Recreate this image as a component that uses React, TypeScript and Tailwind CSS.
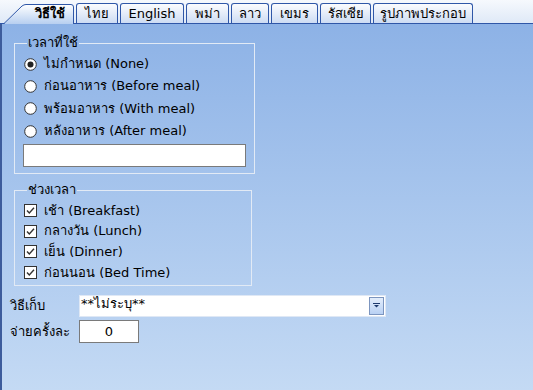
import React from "react";

const font = { fontFamily: '"DejaVu Sans", Tahoma, "Noto Sans", sans-serif' };

function Radio({ checked }: { checked?: boolean }) {
  return (
    <svg width="13" height="13" viewBox="0 0 13 13" className="shrink-0">
      <circle cx="6.5" cy="6.5" r="5.8" fill="#fff" stroke="#333" strokeWidth="1" />
      {checked && <circle cx="6.5" cy="6.5" r="3" fill="#222" />}
    </svg>
  );
}

function Check() {
  return (
    <svg width="13" height="13" viewBox="0 0 13 13" className="shrink-0">
      <rect x="0.5" y="0.5" width="12" height="12" fill="#fff" stroke="#333" />
      <path d="M3 6.5 L5.3 9 L10 3.8" fill="none" stroke="#333" strokeWidth="1.4" />
    </svg>
  );
}

const tabs = [
  { label: "ไทย", w: 42 },
  { label: "English", w: 64 },
  { label: "พม่า", w: 43 },
  { label: "ลาว", w: 38 },
  { label: "เขมร", w: 47 },
  { label: "รัสเซีย", w: 51 },
  { label: "รูปภาพประกอบ", w: 100 },
];

export default function App() {
  return (
    <div className="w-[533px] h-[390px] overflow-hidden flex flex-col text-[13px] text-black" style={font}>
      {/* tab strip */}
      <div className="h-[24px] shrink-0 flex items-end bg-gradient-to-b from-[#f6f9fd] to-[#dfe9f7] border-b border-[#2f57a8]">
        <div className="relative w-[70px] h-[20px] ml-[4px] mb-[-1px] flex items-center justify-end pr-[9px] font-bold">
          <svg className="absolute inset-0" width="70" height="20" viewBox="0 0 70 20">
            <defs>
              <linearGradient id="sel" x1="0" y1="0" x2="0" y2="1">
                <stop offset="0" stopColor="#ffffff" />
                <stop offset="1" stopColor="#b7cff0" />
              </linearGradient>
            </defs>
            <path d="M0 20 L18 2 Q20 0.5 22 0.5 L67 0.5 Q69.5 0.5 69.5 3 L69.5 20 Z" fill="url(#sel)" />
            <path d="M0 19.5 L18 2 Q20 0.5 22 0.5 L67 0.5 Q69.5 0.5 69.5 3 L69.5 20" fill="none" stroke="#2f57a8" />
          </svg>
          <span className="relative">วิธีใช้</span>
        </div>
        {tabs.map((t) => (
          <div
            key={t.label}
            className="h-[20px] ml-[2px] rounded-t-[3px] border border-b-0 border-[#2f57a8] bg-gradient-to-b from-[#fbfcfe] to-[#cddcf3] flex items-center justify-center whitespace-nowrap"
            style={{ width: t.w }}
          >
            {t.label}
          </div>
        ))}
      </div>

      {/* panel */}
      <div className="flex-1 border-l-2 border-[#3d5c9c] bg-gradient-to-b from-[#8db2e6] to-[#c4daf4] pl-[12px] pt-[12px] flex flex-col">
        <fieldset className="w-[238px] border border-[#e2eaf5] px-[8px] pb-[6px]">
          <legend className="px-[1px] ml-[4px] leading-[14px]">เวลาที่ใช้</legend>
          <div className="flex flex-col pt-[3px]">
            {[
              ["ไม่กำหนด (None)", true],
              ["ก่อนอาหาร (Before meal)", false],
              ["พร้อมอาหาร (With meal)", false],
              ["หลังอาหาร (After meal)", false],
            ].map(([l, c]) => (
              <div key={l as string} className="flex items-center gap-[7px] h-[22.3px] ml-[1px] whitespace-nowrap">
                <Radio checked={c as boolean} />
                <span className="leading-[14px]">{l as string}</span>
              </div>
            ))}
          </div>
          <div className="mt-[2px] h-[23px] w-[223px] bg-white border border-[#7a7a7a]" />
        </fieldset>

        <fieldset className="mt-[9px] w-[238px] border border-[#e2eaf5] px-[8px] pb-[2px]">
          <legend className="px-[1px] ml-[4px] leading-[14px]">ช่วงเวลา</legend>
          <div className="flex flex-col pt-[3px]">
            {["เช้า (Breakfast)", "กลางวัน (Lunch)", "เย็น (Dinner)", "ก่อนนอน (Bed Time)"].map((l) => (
              <div key={l} className="flex items-center gap-[7px] h-[20.7px] ml-[1px] whitespace-nowrap">
                <Check />
                <span className="leading-[14px]">{l}</span>
              </div>
            ))}
          </div>
        </fieldset>

        <div className="mt-[9px] ml-[-4px] flex items-center h-[22px]">
          <span className="w-[69px]">วิธีเก็บ</span>
          <div className="w-[307px] h-[22px] bg-white border border-[#dfe8f5] flex items-center justify-between pl-[1px] pr-[1px]">
            <span className="leading-[14px] self-start mt-[1px]">**ไม่ระบุ**</span>
            <div className="w-[15px] h-[18px] border border-[#7c95bf] bg-gradient-to-b from-[#e3edfb] to-[#b9d1f4] flex items-center justify-center">
              <svg width="7" height="5" viewBox="0 0 7 5">
                <rect x="0" y="0" width="7" height="1" fill="#1e3a6e" />
                <path d="M1 2 L6 2 L3.5 4.5 Z" fill="#1e3a6e" />
              </svg>
            </div>
          </div>
        </div>

        <div className="mt-[4px] ml-[-4px] flex items-center h-[22px]">
          <span className="w-[69px]">จ่ายครั้งละ</span>
          <div className="w-[60px] h-[23px] bg-white border border-[#7a7a7a] flex items-center justify-center">0</div>
        </div>
      </div>
    </div>
  );
}
